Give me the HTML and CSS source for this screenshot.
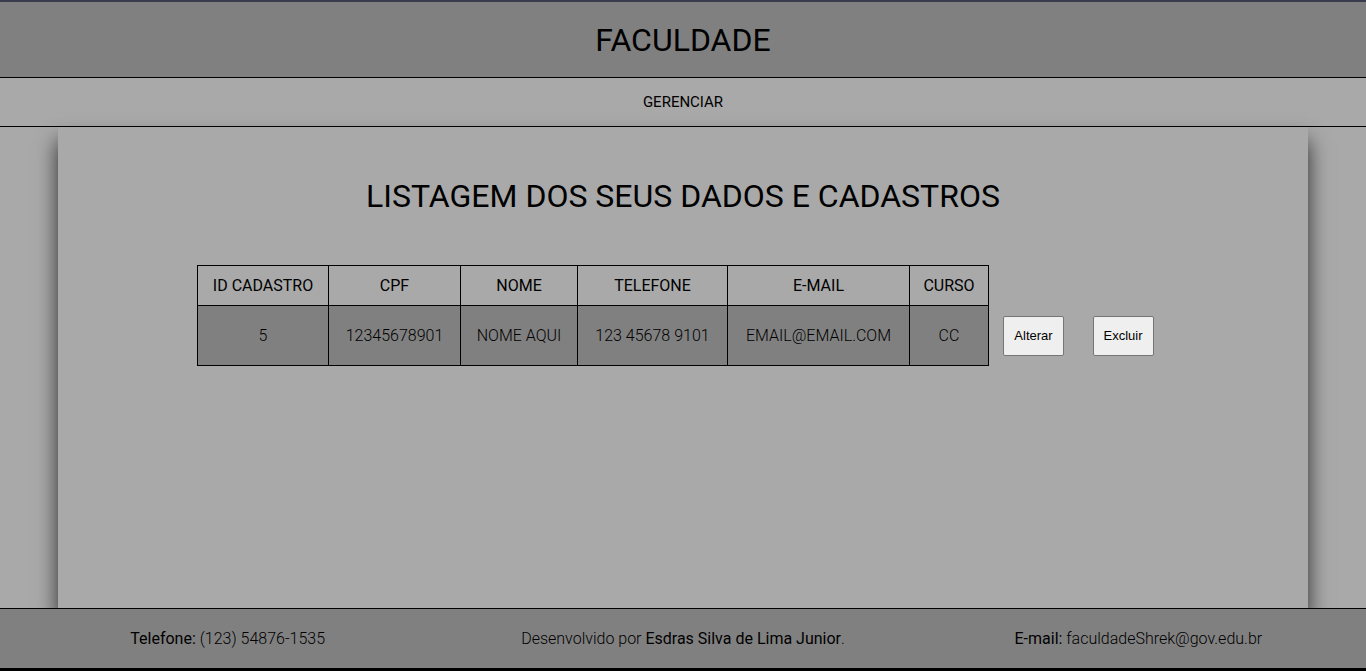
FILE: index.html
```html
<!DOCTYPE html>
<html lang="pt-BR">
<head>
<meta charset="utf-8">
<title>Faculdade</title>
<link rel="stylesheet" href="styles.css">
</head>
<body>
<header class="topo">
  <h1 class="marca">FACULDADE</h1>
</header>
<nav class="menu">
  <a class="menu-link" href="#">GERENCIAR</a>
</nav>
<main class="conteudo">
  <h2 class="titulo">LISTAGEM DOS SEUS DADOS E CADASTROS</h2>
  <table class="tabela">
    <thead>
      <tr>
        <th class="c-id">ID CADASTRO</th>
        <th class="c-cpf">CPF</th>
        <th class="c-nome">NOME</th>
        <th class="c-tel">TELEFONE</th>
        <th class="c-mail">E-MAIL</th>
        <th class="c-curso">CURSO</th>
        <th class="acao"></th>
        <th class="acao"></th>
      </tr>
    </thead>
    <tbody>
      <tr>
        <td>5</td>
        <td>12345678901</td>
        <td>NOME AQUI</td>
        <td>123 45678 9101</td>
        <td>EMAIL@EMAIL.COM</td>
        <td>CC</td>
        <td class="acao"><button class="botao" type="button">Alterar</button></td>
        <td class="acao"><button class="botao" type="button">Excluir</button></td>
      </tr>
    </tbody>
  </table>
</main>
<footer class="rodape">
  <div class="rodape-item"><strong>Telefone:</strong> (123) 54876-1535</div>
  <div class="rodape-item">Desenvolvido por <strong>Esdras Silva de Lima Junior</strong>.</div>
  <div class="rodape-item"><strong>E-mail:</strong> faculdadeShrek@gov.edu.br</div>
</footer>
</body>
</html>
```
FILE: styles.css
```css
html, body {
  margin: 0;
  padding: 0;
}
body {
  background: #a9a9a9;
  font-family: Roboto, "Noto Sans", sans-serif;
  color: #000;
  height: 671px;
  display: flex;
  flex-direction: column;
  overflow: hidden;
}
.topo {
  background: #808080;
  border-top: 2px solid #393b4f;
  border-bottom: 1px solid #000;
  height: 75px;
  display: flex;
  align-items: center;
  justify-content: center;
}
.marca {
  margin: 0;
  font-size: 32px;
  font-weight: 400;
  line-height: 1;
}
.menu {
  height: 48px;
  border-bottom: 1px solid #000;
  display: flex;
  align-items: center;
  justify-content: center;
}
.menu-link {
  color: #000;
  text-decoration: none;
  font-size: 15px;
}
.conteudo {
  flex: 1;
  width: 1250px;
  margin: 0 auto;
  background: #a9a9a9;
  box-shadow: 0 14px 20px rgba(0, 0, 0, 0.75);
  padding-top: 50px;
  box-sizing: border-box;
}
.titulo {
  margin: 0 0 50px;
  text-align: center;
  font-size: 32px;
  font-weight: 400;
  line-height: 38px;
}
.tabela {
  border-collapse: collapse;
  margin: 0 0 0 139px;
  font-size: 16px;
}
.tabela th {
  border: 1px solid #000;
  height: 39px;
  padding: 0;
  font-weight: 400;
  background: #a9a9a9;
}
.tabela td {
  border: 1px solid #000;
  background: #808080;
  height: 59px;
  padding: 0;
  text-align: center;
  font-weight: 300;
}
.tabela th.acao, .tabela td.acao {
  border: none;
  background: transparent;
}
.tabela th.acao { width: 89px; }
.c-id { width: 130px; }
.c-cpf { width: 131px; }
.c-nome { width: 116px; }
.c-tel { width: 149px; }
.c-mail { width: 181px; }
.c-curso { width: 78px; }
.tabela td.acao {
  text-align: left;
  padding-left: 14px;
}
.botao {
  font-family: "Liberation Sans", Arial, sans-serif;
  font-size: 13px;
  height: 40px;
  width: 61px;
  background: #efefef;
  border: 1px solid #767676;
  border-radius: 2px;
  color: #000;
  padding: 0;
}
.rodape {
  background: #808080;
  border-top: 1px solid #000;
  border-bottom: 3px solid #000;
  height: 59px;
  display: flex;
  align-items: center;
  font-size: 16px;
  font-weight: 300;
  position: relative;
  z-index: 1;
}
.rodape-item {
  flex: 1;
  text-align: center;
}
.rodape-item strong {
  font-weight: 400;
}
```
